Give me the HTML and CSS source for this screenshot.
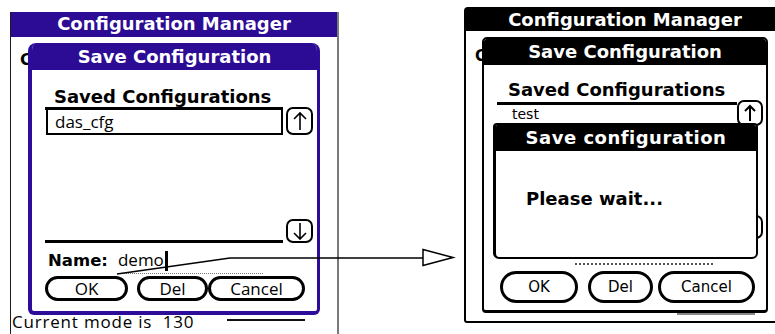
FILE: index.html
```html
<!DOCTYPE html>
<html>
<head lang="en">
    <meta charset="UTF-8">
    <title>Configuration Manager</title>
    <link rel="stylesheet" href="styles.css">
</head>
<body>
<div id="figure">
    <div class="palm color">
        <div class="bar">Configuration Manager</div>
        <div class="screen">
            <p class="behind">C</p>
            <div class="status">
                <span class="mode">Current mode is&nbsp; 130</span>
                <span class="peek"></span>
            </div>
        </div>
        <div class="dialog">
            <div class="head">Save Configuration</div>
            <div class="body">
                <p class="label">Saved Configurations</p>
                <div class="listrow">
                    <div class="list">
                        <div class="item selected">das_cfg</div>
                    </div>
                    <div class="scroll">
                        <span class="arrow up"><svg width="16" height="20" viewBox="0 0 16 20"><path d="M8 19V2M2 8L8 2L14 8" fill="none" stroke="#000" stroke-width="1.6"/></svg></span>
                        <span class="arrow down"><svg width="16" height="18" viewBox="0 0 16 18"><path d="M8 1V17M2 11L8 17L14 11" fill="none" stroke="#000" stroke-width="1.6"/></svg></span>
                    </div>
                </div>
                <div class="name">
                    <b>Name:</b>
                    <span class="field">demo<i class="caret"></i></span>
                </div>
                <div class="buttons">
                    <span class="btn ok">OK</span>
                    <span class="btn del">Del</span>
                    <span class="btn cancel">Cancel</span>
                </div>
            </div>
        </div>
    </div>

    <div class="palm mono">
        <div class="bar">Configuration Manager</div>
        <div class="screen">
            <p class="behind">C</p>
            <div class="status">
                <span class="peek"></span>
            </div>
        </div>
        <div class="dialog">
            <div class="head">Save Configuration</div>
            <div class="body">
                <p class="label">Saved Configurations</p>
                <div class="listrow">
                    <div class="list">
                        <div class="item">test</div>
                    </div>
                    <div class="scroll">
                        <span class="arrow up"><svg width="14" height="18" viewBox="0 0 14 18"><path d="M7 17V2M2 7L7 2L12 7" fill="none" stroke="#000" stroke-width="2"/></svg></span>
                        <span class="arrow down"><svg width="14" height="16" viewBox="0 0 14 16"><path d="M7 1V15M2 10L7 15L12 10" fill="none" stroke="#000" stroke-width="2"/></svg></span>
                    </div>
                </div>
                <div class="name">
                    <b>Name:</b>
                    <span class="field"></span>
                </div>
                <div class="buttons">
                    <span class="btn ok">OK</span>
                    <span class="btn del">Del</span>
                    <span class="btn cancel">Cancel</span>
                </div>
            </div>
            <div class="wait">
                <div class="head">Save configuration</div>
                <p class="msg">Please wait...</p>
            </div>
        </div>
    </div>

    <svg id="callout" width="775" height="334" viewBox="0 0 775 334">
        <path d="M117 274L230 258H423" fill="none" stroke="#000" stroke-width="1.5"/>
        <polygon points="423,249.5 453,257.5 423,265.5" fill="#fff" stroke="#000" stroke-width="1.5"/>
    </svg>
</div>
</body>
</html>
```

FILE: styles.css
```css
*{
    margin: 0;
    padding: 0;
}
body{
    width: 775px;
    height: 334px;
    overflow: hidden;
    background: #fff;
    font-family: "Open Sans", "Noto Sans", sans-serif;
    color: #000;
}
#figure{
    position: relative;
    display: flex;
    align-items: flex-start;
    height: 334px;
    padding-left: 10px;
}
#callout{
    position: absolute;
    left: 0;
    top: 0;
    pointer-events: none;
}
.palm{
    position: relative;
    flex-shrink: 0;
    display: flex;
    flex-direction: column;
    box-sizing: border-box;
}
.bar, .head{
    color: #fff;
    text-align: center;
    font-family: "DejaVu Sans", sans-serif;
    font-weight: bold;
    font-size: 18px;
}
.screen{
    flex: 1;
    display: flex;
    flex-direction: column;
}
.behind{
    font: bold 16px/18px "DejaVu Sans", sans-serif;
}
.status{
    margin-top: auto;
    display: flex;
    align-items: flex-start;
}
.dialog{
    position: absolute;
    box-sizing: border-box;
    display: flex;
    flex-direction: column;
    overflow: hidden;
    background: #fff;
}
.body{
    flex: 1;
}
.label{
    font-family: "DejaVu Sans", sans-serif;
    font-weight: bold;
    font-size: 18px;
    line-height: 20px;
}
.listrow{
    display: flex;
    align-items: flex-start;
}
.list{
    box-sizing: border-box;
    border-top: 3px solid #000;
    border-bottom: 3px solid #000;
}
.item{
    box-sizing: border-box;
}
.scroll{
    display: flex;
    flex-direction: column;
    justify-content: space-between;
}
.arrow{
    box-sizing: border-box;
    display: flex;
    align-items: center;
    justify-content: center;
    border: 2px solid #000;
    border-radius: 7px;
}
.arrow svg{
    display: block;
}
.name{
    display: flex;
    align-items: baseline;
}
.field{
    position: relative;
    border-bottom: 1px dotted #777;
}
.buttons{
    display: flex;
}
.btn{
    box-sizing: border-box;
    display: flex;
    align-items: center;
    justify-content: center;
    border: 3px solid #000;
    border-radius: 14px;
}

/* colour screen, left */
.color{
    margin-top: 12px;
    width: 329px;
    height: 322px;
    border-left: 1px solid #1c1c1c;
    border-right: 2px solid #7a7a7a;
}
.color .bar{
    height: 25px;
    background: #2c0b95;
    line-height: 24px;
}
.color .behind{
    margin: 14px 0 0 9px;
}
.color .status{
    margin-bottom: 3px;
}
.color .mode{
    margin-left: 1px;
    font-size: 17px;
    line-height: 18px;
    letter-spacing: 0.8px;
}
.color .peek{
    width: 78px;
    height: 2px;
    margin: 6px 32px 0 auto;
    background: #111;
}
.color .dialog{
    left: 17px;
    top: 31px;
    width: 292px;
    height: 272px;
    border: 4px solid #2e0c9a;
    border-top: 0;
    border-right-width: 3px;
    border-radius: 8px 8px 6px 6px;
}
.color .head{
    height: 27px;
    background: #2c0b95;
    line-height: 27px;
}
.color .body{
    padding: 17px 3px 0 13px;
}
.color .label{
    margin-left: 9px;
}
.color .list{
    width: 238px;
    height: 136px;
}
.color .item{
    height: 25px;
    margin-left: 1px;
    padding-left: 7px;
    border: 2px solid #000;
    border-top: 0;
    font-size: 17px;
    line-height: 23px;
}
.color .scroll{
    width: 27px;
    height: 136px;
    margin-left: 3px;
}
.color .up{
    height: 28px;
}
.color .down{
    height: 24px;
}
.color .name{
    margin: 4px 0 0 3px;
    height: 26px;
    line-height: 26px;
}
.color .name b{
    font: bold 16.5px "DejaVu Sans", sans-serif;
}
.color .field{
    margin-left: 10px;
    width: 145px;
    font-size: 17px;
}
.color .caret{
    position: absolute;
    left: 47px;
    top: 4px;
    width: 3px;
    height: 20px;
    background: #000;
}
.color .buttons{
    margin-top: 3px;
    font-size: 17px;
}
.color .btn{
    height: 25px;
}
.color .ok{
    width: 83px;
}
.color .del{
    width: 71px;
    margin-left: 9px;
}
.color .cancel{
    width: 97px;
}

/* monochrome screen, right; its right edge runs off the picture */
.mono{
    margin: 7px 0 0 125px;
    width: 322px;
    height: 316px;
    border: 2px solid #000;
    border-radius: 4px 4px 3px 3px;
    font-family: "DejaVu Sans", sans-serif;
}
.mono .bar{
    height: 22px;
    background: #000;
    line-height: 22px;
}
.mono .behind{
    margin: 16px 0 0 9px;
    font-size: 15px;
}
.mono .status{
    margin-bottom: 6px;
}
.mono .peek{
    width: 78px;
    height: 3px;
    margin: 0 29px 0 auto;
    background: #888;
}
.mono .dialog{
    left: 16px;
    top: 28px;
    width: 286px;
    height: 276px;
    border: 2px solid #000;
    border-bottom-width: 3px;
    border-radius: 5px 5px 4px 4px;
}
.mono .head{
    height: 26px;
    background: #000;
    line-height: 26px;
}
.mono .body{
    padding: 15px 0 0 13px;
}
.mono .label{
    margin-left: 11px;
}
.mono .list{
    width: 240px;
    height: 136px;
    margin-top: 2px;
}
.mono .item{
    padding-left: 15px;
    font-size: 14px;
    line-height: 18px;
}
.mono .scroll{
    width: 26px;
    height: 139px;
}
.mono .up{
    height: 26px;
}
.mono .down{
    height: 24px;
}
.mono .name{
    align-items: flex-end;
    margin: 4px 0 0 4px;
    height: 22px;
    font-size: 15px;
}
.mono .name b{
    margin-bottom: 6px;
    line-height: 18px;
}
.mono .field{
    margin-left: 20px;
    width: 138px;
    height: 20px;
    border-bottom: 2px dotted #555;
}
.mono .buttons{
    margin: 6px 0 0 3px;
    font-size: 15px;
}
.mono .btn{
    height: 32px;
    border-radius: 16px;
}
.mono .ok{
    width: 78px;
}
.mono .del{
    width: 65px;
    margin-left: 10px;
}
.mono .cancel{
    width: 97px;
    margin-left: 5px;
}
.mono .wait{
    position: absolute;
    left: 9px;
    top: 84px;
    width: 265px;
    height: 136px;
    box-sizing: border-box;
    border: 2px solid #000;
    border-left-width: 3px;
    border-radius: 4px 4px 6px 6px;
    overflow: hidden;
    background: #fff;
}
.mono .wait .head{
    height: 26px;
    letter-spacing: 0.5px;
}
.msg{
    margin: 37px 0 0 30px;
    font-size: 18px;
    font-weight: bold;
}
```
